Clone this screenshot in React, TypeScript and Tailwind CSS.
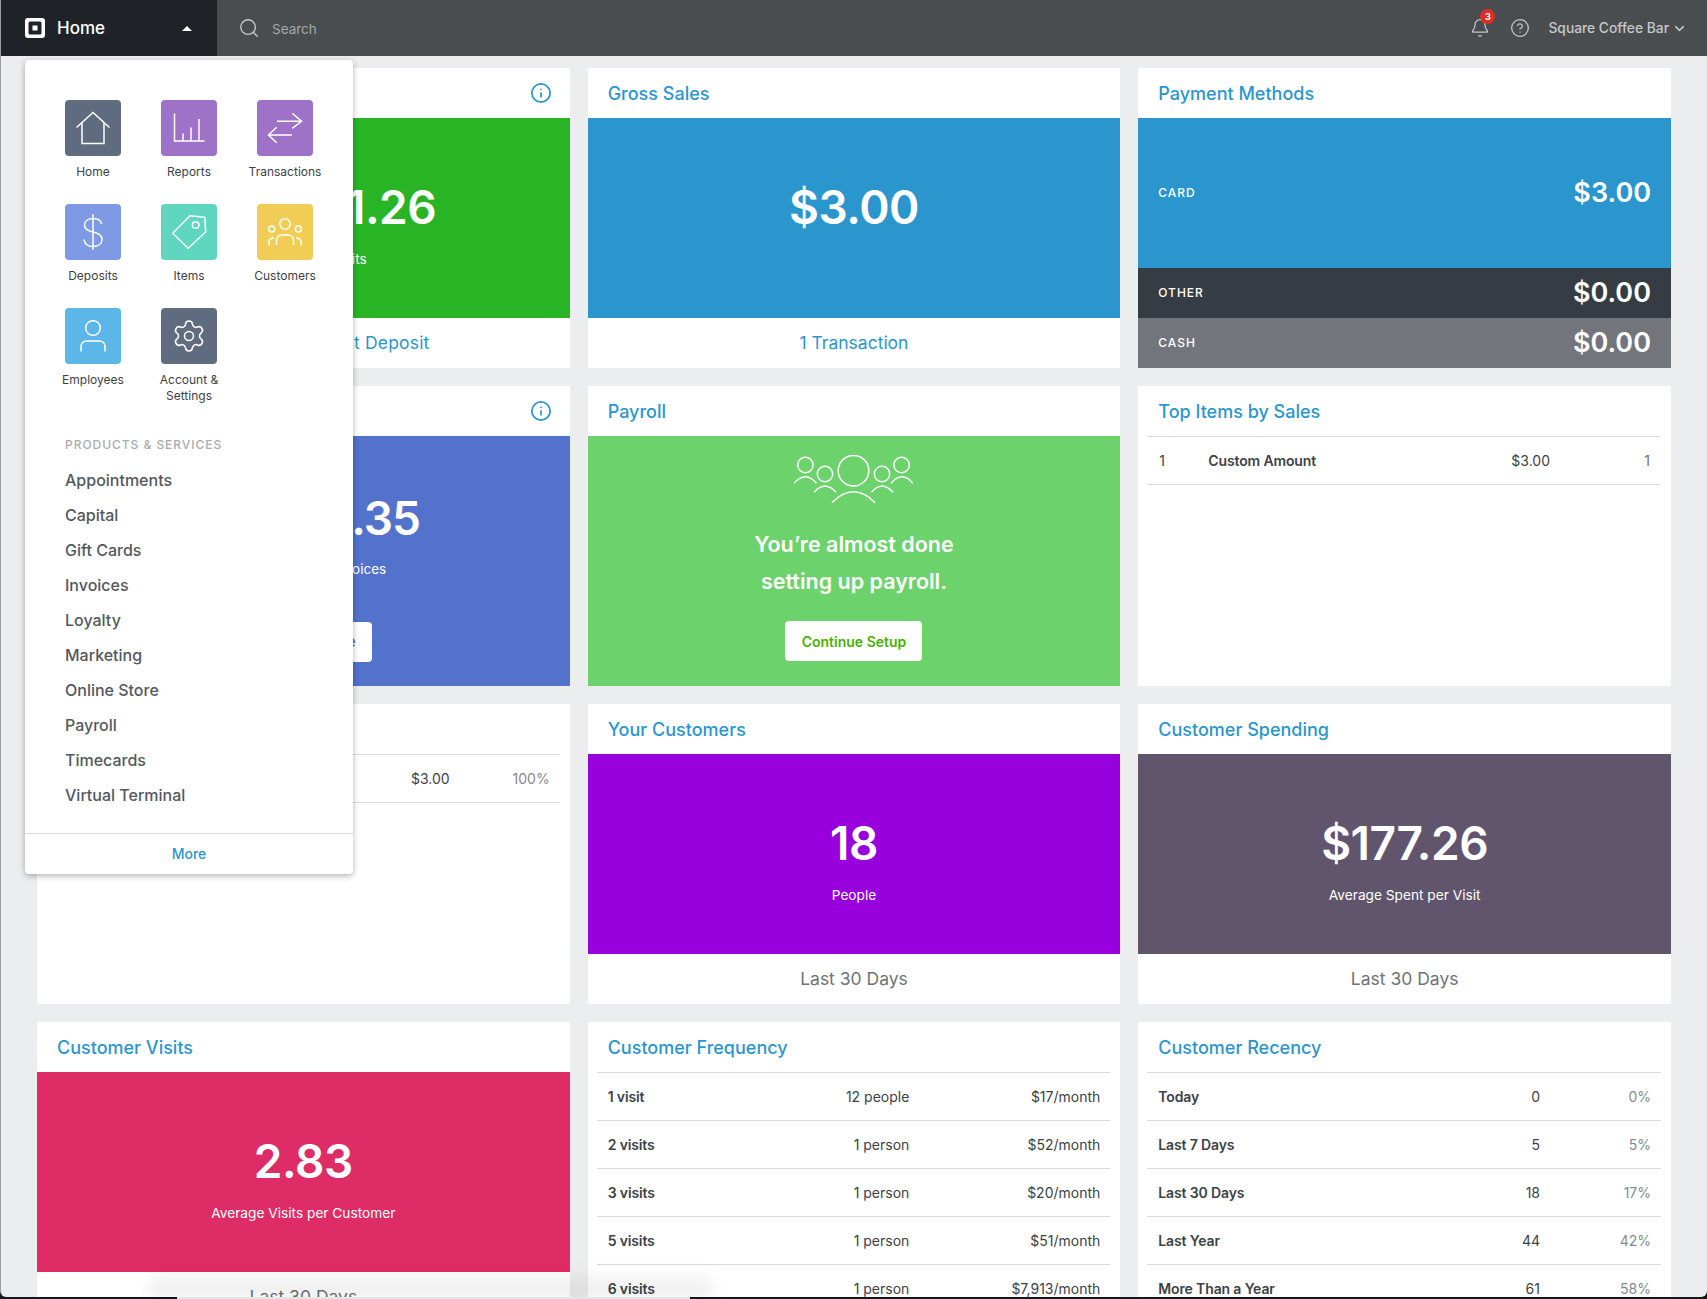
import { Bell, ChevronDown, CircleHelp, Info, Search, Settings } from "lucide-react";
import type { ReactNode } from "react";

const IconSvg = ({ children }: { children: ReactNode }) => (
  <svg viewBox="0 0 56 56" className="w-14 h-14" fill="none" stroke="white" strokeWidth="1.5">
    {children}
  </svg>
);

const tiles = [
  {
    label: "Home",
    bg: "bg-[#5f6b7e]",
    icon: (
      <IconSvg>
        <path d="M11.5 27.5L28 12.5L44.5 27.5M17 22.5V43.5H39V22.5" />
      </IconSvg>
    ),
  },
  {
    label: "Reports",
    bg: "bg-[#9e73c7]",
    icon: (
      <IconSvg>
        <path d="M13.5 13.5V41H43.5M22 33.5V41M30 27.5V41M38 19V41" />
      </IconSvg>
    ),
  },
  {
    label: "Transactions",
    bg: "bg-[#9e73c7]",
    icon: (
      <IconSvg>
        <path d="M20 21.3H44.5M35.3 13.3L44.5 21.3L35.3 28.3M35 35H11.5M19.7 27.3L11.5 35L19.7 42.7" />
      </IconSvg>
    ),
  },
  {
    label: "Deposits",
    bg: "bg-[#7f9ae5]",
    icon: (
      <IconSvg>
        <path d="M28 10V46M36.5 20C36 16.5 32.5 14.5 28 14.5C23 14.5 19.5 17 19.5 21C19.5 25.5 23.5 27 28 28C33 29 37 31 37 35.5C37 40 33 42.5 28 42.5C23 42.5 19.5 40 19 35.5" />
      </IconSvg>
    ),
  },
  {
    label: "Items",
    bg: "bg-[#5ed6c0]",
    icon: (
      <IconSvg>
        <path d="M11.7 29.3L29 11.7L43.7 13.3L44.7 27.7L27.3 44.3Z" strokeLinejoin="round" />
        <circle cx="34.7" cy="21" r="3.3" />
      </IconSvg>
    ),
  },
  {
    label: "Customers",
    bg: "bg-[#f2cd55]",
    icon: (
      <IconSvg>
        <circle cx="28" cy="20" r="5.3" />
        <circle cx="14.7" cy="25" r="3" />
        <circle cx="41.3" cy="25" r="3" />
        <path d="M19.5 41V36.5C19.5 33 22 31 25 31H31C34 31 36.5 33 36.5 36.5V41M12 41.5V38C12 35.5 14 34 17 34M44 41.5V38C44 35.5 42 34 39 34" />
      </IconSvg>
    ),
  },
  {
    label: "Employees",
    bg: "bg-[#5cb6e8]",
    icon: (
      <IconSvg>
        <circle cx="28" cy="20" r="7.3" />
        <path d="M16 43.5V39C16 35 18.5 33 22 33H34C37.5 33 40 35 40 39V43.5" />
      </IconSvg>
    ),
  },
  {
    label: "Account & Settings",
    bg: "bg-[#5f6b7e]",
    icon: <Settings size={36} strokeWidth={1.05} color="white" />,
  },
];

const products = [
  "Appointments",
  "Capital",
  "Gift Cards",
  "Invoices",
  "Loyalty",
  "Marketing",
  "Online Store",
  "Payroll",
  "Timecards",
  "Virtual Terminal",
];

const frequency = [
  ["1 visit", "12 people", "$17/month"],
  ["2 visits", "1 person", "$52/month"],
  ["3 visits", "1 person", "$20/month"],
  ["5 visits", "1 person", "$51/month"],
  ["6 visits", "1 person", "$7,913/month"],
];

const recency = [
  ["Today", "0", "0%"],
  ["Last 7 Days", "5", "5%"],
  ["Last 30 Days", "18", "17%"],
  ["Last Year", "44", "42%"],
  ["More Than a Year", "61", "58%"],
];

const Card = ({ title, info, children }: { title: string; info?: boolean; children: ReactNode }) => (
  <div className="bg-white h-[300px] flex flex-col">
    <div className="h-[50px] shrink-0 flex items-center justify-between pl-5 pr-[18px]">
      <h3 className="text-[18px] font-medium text-[#2b96cd]">{title}</h3>
      {info && <Info size={22} strokeWidth={1.9} color="#2b96cd" />}
    </div>
    {children}
  </div>
);

const Hero = ({
  bg,
  value,
  label,
  footer,
  footerBlue,
}: {
  bg: string;
  value: string;
  label?: string;
  footer: ReactNode;
  footerBlue?: boolean;
}) => (
  <>
    <div className={`${bg} h-[200px] flex flex-col items-center pt-[59px] text-white`}>
      <p className="text-[46px] leading-[60px] font-semibold tracking-[-0.01em] whitespace-nowrap">{value}</p>
      {label && <p className="mt-3 text-[13.7px] leading-5">{label}</p>}
    </div>
    <div
      className={`h-[50px] flex items-center justify-center text-[17.5px] ${
        footerBlue ? "text-[#2b96cd]" : "text-[#6f7377]"
      }`}
    >
      {footer}
    </div>
  </>
);

const PayRow = ({ label, value, className }: { label: string; value: string; className: string }) => (
  <div className={`${className} flex items-center justify-between pl-5 pr-5 text-white`}>
    <span className="text-[12px] font-medium tracking-[0.08em]">{label}</span>
    <span className="mt-px text-[27px] font-semibold">{value}</span>
  </div>
);

const TableRows = ({ rows, cols, dimLast }: { rows: string[][]; cols: string; dimLast?: boolean }) => (
  <div className="border-t border-[#d8d9da] ml-[9px] mr-[10px]">
    {rows.map((row) => (
      <div
        key={row[0]}
        className={`h-12 border-b border-[#d8d9da] grid ${cols} items-center pl-[11px] pr-[10px] text-[14px] text-[#3d4247]`}
      >
        <span className="font-semibold tracking-[-0.01em]">{row[0]}</span>
        <span className="text-right">{row[1]}</span>
        <span className={`text-right ${dimLast ? "text-[#868a8d]" : ""}`}>{row[2]}</span>
      </div>
    ))}
  </div>
);

const PayrollArt = () => (
  <svg viewBox="0 0 119 48" className="w-[119px] h-12" fill="none" stroke="white" strokeWidth="1.5">
    <circle cx="59.5" cy="15.7" r="15.3" />
    <circle cx="31" cy="19" r="7.7" />
    <circle cx="88" cy="19" r="7.7" />
    <circle cx="11.4" cy="10" r="7.7" />
    <circle cx="107.6" cy="10" r="7.7" />
    <path d="M38 47.7Q59.5 26 81 47.7M20 37.3Q31 24.7 42 37.3M0 28.3Q11.4 15 22.5 28.3M77.5 37.3Q88 24.7 99 37.3M97 28.3Q108 15 119 28.3" />
  </svg>
);

const Menu = () => (
  <div className="absolute left-[25px] top-[60px] w-[328px] h-[814px] bg-white rounded shadow-[0_2px_6px_rgba(0,0,0,0.3)] pt-10 z-10">
    <div className="pl-5 grid grid-cols-[96px_96px_96px] auto-rows-[104px]">
      {tiles.map((tile) => (
        <div key={tile.label} className="flex flex-col items-center">
          <div className={`${tile.bg} w-14 h-14 rounded flex items-center justify-center`}>{tile.icon}</div>
          <p className="mt-2 px-3 text-[12px] leading-4 text-[#3d4247] text-center">{tile.label}</p>
        </div>
      ))}
    </div>
    <p className="mt-[25px] ml-10 text-[12px] leading-4 font-medium tracking-[0.08em] text-[#a9abad]">
      PRODUCTS &amp; SERVICES
    </p>
    <div className="mt-[9px] mb-[21px] ml-10">
      {products.map((item) => (
        <p key={item} className="h-[35px] flex items-center text-[16px] font-medium text-[#53585d]">
          {item}
        </p>
      ))}
    </div>
    <div className="border-t border-[#d8d9da] h-[40px] flex items-center justify-center text-[14px] font-medium text-[#2b96cd]">
      More
    </div>
  </div>
);

const TopBar = () => (
  <header className="h-14 shrink-0 bg-[#4a4d50] flex items-center">
    <div className="w-[216px] h-full bg-[#1f2328] flex items-center pl-6 pr-[25px] text-white">
      <svg viewBox="0 0 20 20" className="w-5 h-5">
        <path
          fill="white"
          fillRule="evenodd"
          d="M3 0H17A3 3 0 0 1 20 3V17A3 3 0 0 1 17 20H3A3 3 0 0 1 0 17V3A3 3 0 0 1 3 0ZM5 3.5A1.5 1.5 0 0 0 3.5 5V15A1.5 1.5 0 0 0 5 16.5H15A1.5 1.5 0 0 0 16.5 15V5A1.5 1.5 0 0 0 15 3.5ZM7.5 7.5H12.5V12.5H7.5Z"
        />
      </svg>
      <span className="ml-[12px] mt-[2px] text-[17px] font-medium">Home</span>
      <span className="ml-auto w-0 h-0 border-x-[5px] border-x-transparent border-b-[5px] border-b-white" />
    </div>
    <Search size={22} strokeWidth={1.5} color="#c5c7c9" className="ml-[21px]" />
    <span className="ml-[12px] mt-0.5 text-[13.5px] text-[#a5a8aa]">Search</span>
    <div className="ml-auto flex items-center text-[#c5c7c9] pr-5">
      <div className="relative">
        <Bell size={20} strokeWidth={1.5} />
        <span className="absolute -top-[9px] left-[10px] w-[15px] h-[15px] rounded-full bg-[#e02c24] text-white text-[9px] font-bold flex items-center justify-center">
          3
        </span>
      </div>
      <CircleHelp size={20} strokeWidth={1.5} className="ml-[20px]" />
      <span className="ml-[18px] text-[13.8px] font-medium">Square Coffee Bar</span>
      <ChevronDown size={15} strokeWidth={2.4} className="ml-[3px]" />
    </div>
  </header>
);

export default function App() {
  return (
    <div className="relative h-[1299px] overflow-hidden bg-[#15181b] font-['Inter',sans-serif]">
      <div className="h-[1297px] bg-[#ebedef] border-l border-[#9b9c9e] rounded-b-md overflow-hidden flex flex-col">
        <TopBar />
        <main className="grid grid-cols-3 gap-[18px] pt-3 pl-[36px] pr-[36px]">
          <Card title="Deposits" info>
            <Hero
              bg="bg-[#29b425]"
              value="$124,891.26"
              label="Upcoming Deposits"
              footer={<span className="tracking-[0.01em]">View Details of Latest Deposit</span>}
              footerBlue
            />
          </Card>
          <Card title="Gross Sales">
            <Hero bg="bg-[#2b96cd]" value="$3.00" footer="1 Transaction" footerBlue />
          </Card>
          <Card title="Payment Methods">
            <PayRow className="h-[150px] bg-[#2b96cd]" label="CARD" value="$3.00" />
            <PayRow className="h-[50px] bg-[#363c43]" label="OTHER" value="$0.00" />
            <PayRow className="h-[50px] bg-[#72767c]" label="CASH" value="$0.00" />
          </Card>

          <Card title="Invoices" info>
            <div className="bg-[#5272cb] h-[250px] flex flex-col items-center pt-[52px] text-white">
              <p className="text-[46px] leading-[60px] font-semibold tracking-[-0.024em]">$12,491.35</p>
              <p className="mt-[11px] text-[13.5px] leading-5">Past Outstanding Invoices</p>
              <button className="mt-[43px] w-[138px] h-10 bg-white rounded text-[15px] font-semibold text-[#5272cb]">
                Create Invoice
              </button>
            </div>
          </Card>
          <Card title="Payroll">
            <div className="bg-[#6bd26c] h-[250px] flex flex-col items-center pt-[19px] text-white">
              <PayrollArt />
              <p className="mt-[23px] text-[21.5px] leading-[37px] font-semibold text-center">
                You’re almost done
                <br />
                setting up payroll.
              </p>
              <button className="mt-[21px] w-[137px] h-10 bg-white rounded text-[14px] font-semibold text-[#4ab200]">
                Continue Setup
              </button>
            </div>
          </Card>
          <Card title="Top Items by Sales">
            <div className="border-t border-b border-[#d8d9da] ml-[9px] mr-[11px] h-[49px] grid grid-cols-[49px_1fr_100px_100px] items-center pl-[12px] pr-[10px] text-[14px] text-[#3d4247]">
              <span>1</span>
              <span className="font-semibold tracking-[-0.01em]">Custom Amount</span>
              <span className="text-right">$3.00</span>
              <span className="text-right text-[#6f7377]">1</span>
            </div>
          </Card>

          <Card title="Sales by Category">
            <div className="border-t border-b border-[#d8d9da] ml-[9px] mr-[10px] h-[49px] grid grid-cols-[1fr_100px_100px] items-center px-[10px] text-[14px] text-[#3d4247]">
              <span className="font-semibold">Uncategorized</span>
              <span className="text-right">$3.00</span>
              <span className="text-right text-[#868a8d]">100%</span>
            </div>
          </Card>
          <Card title="Your Customers">
            <Hero bg="bg-[#9800de]" value="18" label="People" footer="Last 30 Days" />
          </Card>
          <Card title="Customer Spending">
            <Hero bg="bg-[#61546d]" value="$177.26" label="Average Spent per Visit" footer="Last 30 Days" />
          </Card>

          <Card title="Customer Visits">
            <Hero bg="bg-[#de2c67]" value="2.83" label="Average Visits per Customer" footer="Last 30 Days" />
          </Card>
          <Card title="Customer Frequency">
            <TableRows rows={frequency} cols="grid-cols-[1fr_140px_191px]" />
          </Card>
          <Card title="Customer Recency">
            <TableRows rows={recency} cols="grid-cols-[1fr_140px_111px]" dimLast />
          </Card>
        </main>
      </div>
      <Menu />
      <div className="absolute left-[150px] bottom-[2px] w-[560px] h-[28px] bg-gradient-to-t from-black/10 to-transparent blur-sm" />
      <div className="absolute left-[177px] bottom-0 w-[513px] h-[2px] bg-[#e4e5e6]" />
    </div>
  );
}
